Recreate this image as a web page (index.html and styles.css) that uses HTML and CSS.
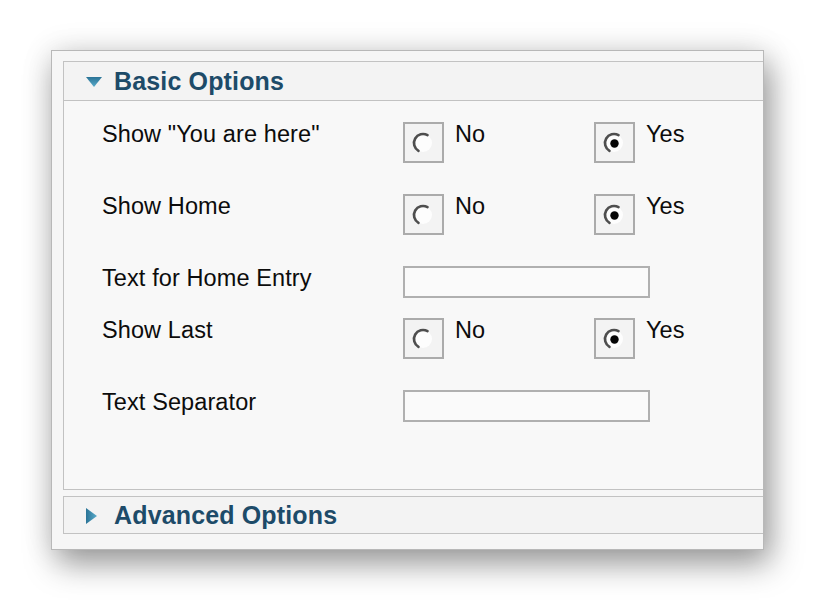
FILE: index.html
```html
<!DOCTYPE html>
<html>
<head>
<meta charset="utf-8">
<link rel="stylesheet" href="styles.css">
</head>
<body>
<div class="window">
  <div class="panel">
    <div class="panel-head">
      <svg class="tri-down" width="16" height="10" viewBox="0 0 16 10"><defs><linearGradient id="g1" x1="0" y1="0" x2="0" y2="1"><stop offset="0" stop-color="#2a7396"/><stop offset="1" stop-color="#5aaccb"/></linearGradient></defs><polygon points="0,0 16,0 8,10" fill="url(#g1)"/></svg>
      <span class="title">Basic Options</span>
    </div>
    <div class="panel-body">
      <div class="row">
        <div class="label">Show "You are here"</div>
        <div class="opt">
          <span class="rbox"><svg width="37" height="37" viewBox="0 0 37 37"><circle cx="18" cy="19" r="9" fill="#fdfdfd"/><path d="M13.5 26.8 A9 9 0 0 1 22.5 11.2" fill="none" stroke="#4e4e4e" stroke-width="2.6" stroke-linecap="round"/></svg></span>
          <span class="opt-text">No</span>
        </div>
        <div class="opt">
          <span class="rbox"><svg width="37" height="37" viewBox="0 0 37 37"><circle cx="18" cy="19" r="9" fill="#fdfdfd"/><path d="M13.5 26.8 A9 9 0 0 1 22.5 11.2" fill="none" stroke="#4e4e4e" stroke-width="2.6" stroke-linecap="round"/><circle cx="18.5" cy="19.5" r="4.2" fill="#050505"/></svg></span>
          <span class="opt-text">Yes</span>
        </div>
      </div>
      <div class="row">
        <div class="label">Show Home</div>
        <div class="opt">
          <span class="rbox"><svg width="37" height="37" viewBox="0 0 37 37"><circle cx="18" cy="19" r="9" fill="#fdfdfd"/><path d="M13.5 26.8 A9 9 0 0 1 22.5 11.2" fill="none" stroke="#4e4e4e" stroke-width="2.6" stroke-linecap="round"/></svg></span>
          <span class="opt-text">No</span>
        </div>
        <div class="opt">
          <span class="rbox"><svg width="37" height="37" viewBox="0 0 37 37"><circle cx="18" cy="19" r="9" fill="#fdfdfd"/><path d="M13.5 26.8 A9 9 0 0 1 22.5 11.2" fill="none" stroke="#4e4e4e" stroke-width="2.6" stroke-linecap="round"/><circle cx="18.5" cy="19.5" r="4.2" fill="#050505"/></svg></span>
          <span class="opt-text">Yes</span>
        </div>
      </div>
      <div class="row short">
        <div class="label">Text for Home Entry</div>
        <div class="field"><input class="text-input" type="text"></div>
      </div>
      <div class="row">
        <div class="label">Show Last</div>
        <div class="opt">
          <span class="rbox"><svg width="37" height="37" viewBox="0 0 37 37"><circle cx="18" cy="19" r="9" fill="#fdfdfd"/><path d="M13.5 26.8 A9 9 0 0 1 22.5 11.2" fill="none" stroke="#4e4e4e" stroke-width="2.6" stroke-linecap="round"/></svg></span>
          <span class="opt-text">No</span>
        </div>
        <div class="opt">
          <span class="rbox"><svg width="37" height="37" viewBox="0 0 37 37"><circle cx="18" cy="19" r="9" fill="#fdfdfd"/><path d="M13.5 26.8 A9 9 0 0 1 22.5 11.2" fill="none" stroke="#4e4e4e" stroke-width="2.6" stroke-linecap="round"/><circle cx="18.5" cy="19.5" r="4.2" fill="#050505"/></svg></span>
          <span class="opt-text">Yes</span>
        </div>
      </div>
      <div class="row short">
        <div class="label">Text Separator</div>
        <div class="field"><input class="text-input" type="text"></div>
      </div>
    </div>
  </div>
  <div class="panel closed">
    <div class="panel-head last">
      <svg class="tri-right" width="11" height="16" viewBox="0 0 11 16"><defs><linearGradient id="g2" x1="0" y1="0" x2="1" y2="0"><stop offset="0" stop-color="#2a7396"/><stop offset="1" stop-color="#5aaccb"/></linearGradient></defs><polygon points="0,0 11,8 0,16" fill="url(#g2)"/></svg>
      <span class="title">Advanced Options</span>
    </div>
  </div>
</div>
</body>
</html>
```
FILE: styles.css
```css
* { box-sizing: border-box; }
html, body { margin: 0; padding: 0; background: #ffffff; }
body {
  min-height: 600px;
  padding: 50px 0 50px 51px;
  font-family: "Liberation Sans", Arial, sans-serif;
  color: #0c0c0c;
}
.window {
  width: 713px;
  background: #f6f6f6;
  border: 1px solid #b8b8b8;
  padding: 10px 0 15px 11px;
  box-shadow: 6px 14px 30px rgba(0,0,0,0.38), 0 0 30px rgba(0,0,0,0.10);
}
.panel {
  border: 1px solid #c2c2c2;
  border-right: none;
  background: #f8f8f8;
}
.panel.closed { margin-top: 6px; }
.panel-head {
  height: 39px;
  display: flex;
  align-items: center;
  padding-left: 22px;
  background: #f3f3f3;
  border-bottom: 1px solid #c2c2c2;
}
.panel-head.last {
  height: 36px;
  border-bottom: none;
}
.tri-down { margin-right: 12px; margin-top: 1px; }
.tri-right { margin-right: 17px; margin-top: 2px; }
.title {
  font-size: 25px;
  font-weight: bold;
  color: #1d4b69;
  line-height: 38px;
  letter-spacing: 0.15px;
}
.panel-body {
  height: 388px;
  padding: 21px 0 0 38px;
}
.row {
  display: grid;
  grid-template-columns: 301px 191px 1fr;
  height: 72px;
  align-items: start;
}
.row.short { height: 52px; }
.label, .opt-text {
  font-size: 23.5px;
  line-height: 28px;
  margin-top: -2px;
  white-space: nowrap;
  letter-spacing: 0.1px;
}
.opt {
  display: flex;
  align-items: flex-start;
}
.rbox {
  width: 41px;
  height: 41px;
  border: 2px solid #ababab;
  background: #f3f3f3;
  display: block;
  margin-right: 11px;
}
.rbox svg { display: block; }
.field { grid-column: 2 / span 2; }
.text-input {
  display: block;
  width: 247px;
  height: 32px;
  border: 2px solid #b0b0b0;
  background: #fafafa;
  margin: 0;
  padding: 0;
  outline: none;
}
```
